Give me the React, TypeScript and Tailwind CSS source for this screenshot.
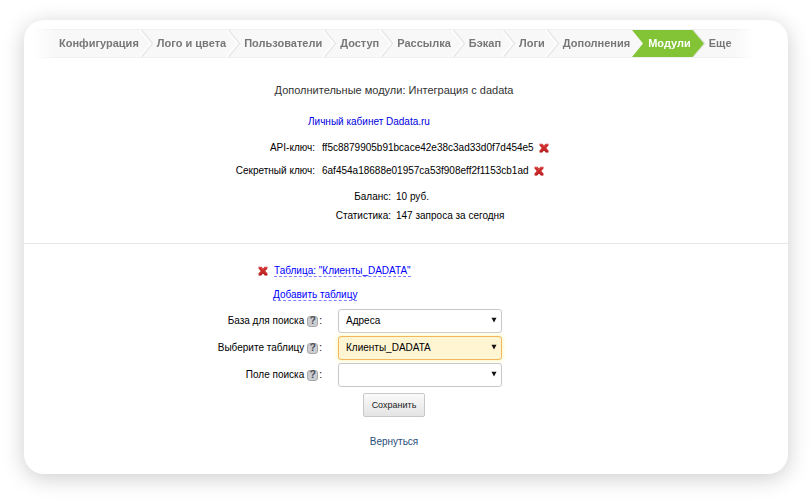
import React, { useState } from "react";
import clsx from "clsx";

const NAV_ITEMS = [
  "Конфигурация",
  "Лого и цвета",
  "Пользователи",
  "Доступ",
  "Рассылка",
  "Бэкап",
  "Логи",
  "Дополнения",
  "Модули",
  "Еще"
];

const ACTIVE_ITEM = "Модули";

const FIELDS = [
  { id: "base", label: "База для поиска", options: ["Адреса"] },
  { id: "table", label: "Выберите таблицу", options: ["Клиенты_DADATA"], highlighted: true },
  { id: "field", label: "Поле поиска", options: [""] }
];

// Chevron between two navigation steps
function Separator({ before, after }: { before: boolean; after: boolean }) {
  return (
    <svg viewBox="0 0 18 27" className="h-[27px] w-[18px] shrink-0" aria-hidden="true">
      {before && <path d="M2 0H18V27H2L13 13.5Z" fill="#82c436" />}
      {after && (
        <>
          <path d="M2 0L14 13.5L2 27" fill="none" stroke="#dcdcdc" />
          <path d="M0 0H1.5L13 13.5L1.5 27H0Z" fill="#82c436" />
        </>
      )}
      {!before && !after && (
        <>
          <path d="M1 0L12 13.5L1 27" fill="none" stroke="#fff" strokeWidth="2" />
          <path d="M2.5 0L13.5 13.5L2.5 27" fill="none" stroke="#e9e9e9" strokeWidth="1.6" />
        </>
      )}
    </svg>
  );
}

function DeleteButton({ title }: { title: string }) {
  return (
    <button type="button" title={title} aria-label={title} className="shrink-0">
      <svg viewBox="0 0 10 10" className="size-[10px]" aria-hidden="true">
        <path
          d="M0.5 0.8H3.4L5 2.4L6.6 0.8H9.5V2.6L7.3 5L9.5 7.4V9.4H6.8L5 7.6L3.2 9.4H0.5V7.4L2.7 5L0.5 2.6Z"
          fill="#c92b2b"
        />
        <path d="M1.2 1.5H3L5 3.6L7 1.5H8.8" fill="none" stroke="#df5a56" strokeWidth="0.9" />
        <path d="M1.2 8.8H3L5 6.8L7 8.8H8.8" fill="none" stroke="#a81c1c" strokeWidth="0.9" />
      </svg>
    </button>
  );
}

function HelpButton({ label }: { label: string }) {
  return (
    <button
      type="button"
      aria-label={`Подсказка: ${label}`}
      className="flex size-[11px] items-center justify-center rounded-[3px] border border-[#a8a8a8] bg-[#cccdd2] text-[10px] leading-none font-bold text-[#4a4d54]"
    >
      ?
    </button>
  );
}

function KeyRow({ label, value }: { label: string; value: string }) {
  return (
    <div className="grid grid-cols-[101px_1fr] gap-[7px]">
      <dt className="text-right whitespace-nowrap">{label}:</dt>
      <dd className="flex items-center gap-[5px] whitespace-nowrap">
        {value}
        <DeleteButton title="Удалить ключ" />
      </dd>
    </div>
  );
}

function SelectField({
  id,
  label,
  options,
  highlighted
}: {
  id: string;
  label: string;
  options: string[];
  highlighted?: boolean;
}) {
  const [value, setValue] = useState(options[0]);

  return (
    <div className="grid grid-cols-[108px_164px] items-center gap-4">
      <div className="flex items-center justify-end whitespace-nowrap">
        <label htmlFor={id} className="mr-[3px]">
          {label}
        </label>
        <HelpButton label={label} />
        <span className="ml-px">:</span>
      </div>
      <div className="relative">
        <select
          id={id}
          value={value}
          onChange={(e) => setValue(e.target.value)}
          className={clsx(
            "block h-6 w-full appearance-none rounded-[3px] border pr-5 pl-[7px] outline-none",
            highlighted
              ? "border-[#f0b75c] bg-[#fff5d2] shadow-[0_0_4px_1px_#fdf6c4]"
              : "border-[#c8c8c8] bg-white"
          )}
        >
          {options.map((option) => (
            <option key={option} value={option}>
              {option}
            </option>
          ))}
        </select>
        <svg viewBox="0 0 6 6" className="pointer-events-none absolute top-2 right-[5px] size-[6px]" aria-hidden="true">
          <path d="M0.5 0.8H5.5L3 5.6Z" fill="#111" />
        </svg>
      </div>
    </div>
  );
}

export default function App() {
  return (
    <div className="min-h-screen bg-white px-6 pt-5 pb-7 font-['Liberation_Sans',Arial,sans-serif] text-[10px] leading-[14px] text-black">
      <div className="rounded-[20px] bg-white pt-[9px] pb-[25px] shadow-[0_4px_22px_rgba(0,0,0,0.2)]">
        <nav className="mr-[33px] ml-2 flex items-center border-y border-[#f0f0f0] bg-[#f8f8f8] mask-[linear-gradient(to_right,transparent,black_24px,black_calc(100%-22px),transparent)] pl-[27px] text-[11px] font-bold text-[#777]">
          {NAV_ITEMS.map((item, index) => (
            <React.Fragment key={item}>
              {index > 0 && <Separator before={item === ACTIVE_ITEM} after={NAV_ITEMS[index - 1] === ACTIVE_ITEM} />}
              <a
                href="#"
                aria-current={item === ACTIVE_ITEM ? "page" : undefined}
                className={clsx(
                  "h-[27px] leading-[27px] whitespace-nowrap",
                  item === ACTIVE_ITEM && "bg-[#82c436] text-white"
                )}
              >
                {item}
              </a>
            </React.Fragment>
          ))}
        </nav>

        <main>
          <section className="pt-[25px] pr-6 pb-5">
            <h1 className="text-center text-[11px] text-[#333]">Дополнительные модули: Интеграция с dadata</h1>

            <div className="mx-auto mt-[18px] max-w-[360px]">
              <a href="#" className="ml-[94px] text-[#0000e0]">
                Личный кабинет Dadata.ru
              </a>
              <dl className="mt-3 space-y-[9px]">
                <KeyRow label="API-ключ" value="ff5c8879905b91bcace42e38c3ad33d0f7d454e5" />
                <KeyRow label="Секретный ключ" value="6af454a18688e01957ca53f908eff2f1153cb1ad" />
              </dl>
              <dl className="mt-3 grid grid-cols-[177px_1fr] gap-x-[5px] gap-y-[5px]">
                <dt className="text-right">Баланс:</dt>
                <dd>10 руб.</dd>
                <dt className="text-right">Статистика:</dt>
                <dd>147 запроса за сегодня</dd>
              </dl>
            </div>
          </section>

          <section className="border-t border-[#e8e8e8] pt-[21px] pr-6">
            <div className="mx-auto max-w-[360px]">
              <div className="flex items-center gap-[6px] pl-11">
                <DeleteButton title="Удалить таблицу" />
                <a href="#" className="border-b border-dashed border-[#8080ff] leading-[11px] text-[#0000ff]">
                  Таблица: "Клиенты_DADATA"
                </a>
              </div>
              <a
                href="#"
                className="mt-3 ml-[59px] inline-block border-b border-dashed border-[#8080ff] leading-[11px] text-[#0000ff]"
              >
                Добавить таблицу
              </a>

              <form onSubmit={(e) => e.preventDefault()}>
                <div className="mt-[7px] space-y-[3px]">
                  {FIELDS.map((field) => (
                    <SelectField key={field.id} {...field} />
                  ))}
                </div>
                <button
                  type="submit"
                  className="mx-auto mt-[6px] block h-6 rounded-[2px] border border-[#c8c8c8] bg-linear-to-b from-[#fafafa] to-[#e4e4e4] px-2 text-[9px] text-[#222]"
                >
                  Сохранить
                </button>
              </form>
            </div>

            <div className="mt-[18px] text-center">
              <a href="#" className="text-[#1f4e79]">
                Вернуться
              </a>
            </div>
          </section>
        </main>
      </div>
    </div>
  );
}
